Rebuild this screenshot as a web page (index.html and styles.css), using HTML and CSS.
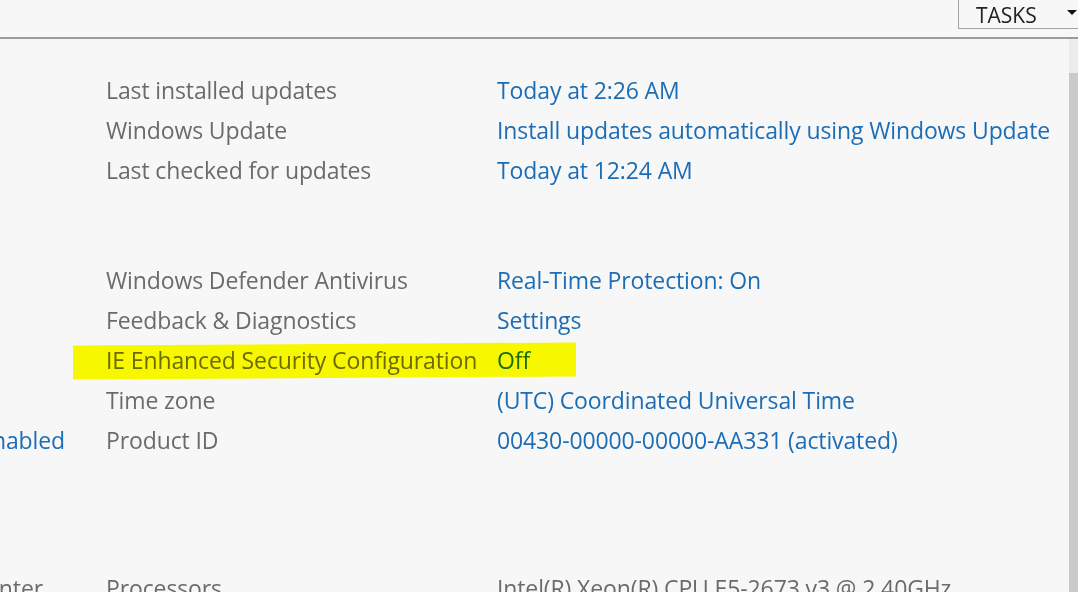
FILE: index.html
```html
<!DOCTYPE html>
<html>
<head>
<meta charset="utf-8">
<link rel="stylesheet" href="styles.css">
</head>
<body>
<div class="page">
  <header class="topbar">
    <div class="tasks">
      <span class="tasks-label">TASKS</span>
      <span class="tasks-caret"></span>
    </div>
  </header>
  <div class="main">
    <div class="content">
      <div class="group g1">
        <div class="side"></div><div class="label">Last installed updates</div><div class="value">Today at 2:26 AM</div>
        <div class="side"></div><div class="label">Windows Update</div><div class="value">Install updates automatically using Windows Update</div>
        <div class="side"></div><div class="label">Last checked for updates</div><div class="value">Today at 12:24 AM</div>
      </div>
      <div class="group g2">
        <div class="side"></div><div class="label">Windows Defender Antivirus</div><div class="value">Real-Time Protection: On</div>
        <div class="side"></div><div class="label">Feedback &amp; Diagnostics</div><div class="value">Settings</div>
        <div class="side"></div><div class="label">IE Enhanced Security Configuration</div><div class="value">Off</div>
        <div class="side"></div><div class="label">Time zone</div><div class="value">(UTC) Coordinated Universal Time</div>
        <div class="side side-link"><span>Enabled</span></div><div class="label">Product ID</div><div class="value">00430-00000-00000-AA331 (activated)</div>
      </div>
      <div class="group g3">
        <div class="side side-gray"><span>Action Center</span></div><div class="label">Processors</div><div class="value value-gray">Intel(R) Xeon(R) CPU E5-2673 v3 @ 2.40GHz</div>
      </div>
      <div class="highlight"></div>
    </div>
    <div class="scrollbar"><div class="thumb"></div></div>
  </div>
</div>
</body>
</html>
```
FILE: styles.css
```css
html, body {
  margin: 0;
  padding: 0;
  background: #f7f7f7;
  overflow: hidden;
}
.page {
  width: 1078px;
  height: 592px;
  overflow: hidden;
  font-family: "Open Sans", "Noto Sans", sans-serif;
  font-size: 23px;
  letter-spacing: -0.12px;
  display: flex;
  flex-direction: column;
}
.topbar {
  height: 37px;
  border-bottom: 2px solid #9b9b9b;
  display: flex;
  justify-content: flex-end;
  align-items: flex-start;
  flex-shrink: 0;
}
.tasks {
  width: 140px;
  height: 30px;
  margin-right: -20px;
  margin-top: -1px;
  border-left: 1px solid #a3a3a3;
  border-bottom: 1px solid #a3a3a3;
  display: flex;
  align-items: center;
  padding-left: 17px;
  padding-top: 2px;
  box-sizing: border-box;
  color: #222;
}
.tasks-label {
  font-size: 21px;
  letter-spacing: 0;
  line-height: 28px;
}
.tasks-caret {
  margin-left: 30px;
  width: 0;
  height: 0;
  border-left: 5px solid transparent;
  border-right: 5px solid transparent;
  border-top: 5px solid #111;
  margin-top: -4px;
}
.main {
  flex: 1;
  display: flex;
  min-height: 0;
}
.content {
  flex: 1;
  position: relative;
  padding-top: 31px;
}
.group {
  display: grid;
  grid-template-columns: 106px 391px auto;
  grid-auto-rows: 40px;
  line-height: 40px;
  white-space: nowrap;
}
.g2 { margin-top: 70px; }
.g3 { margin-top: 108px; }
.label { color: #6b6b6b; }
.value { color: #1c6db5; }
.value-gray { color: #6b6b6b; }
.side {
  display: flex;
  justify-content: flex-end;
  padding-right: 41px;
  min-width: 0;
}
.side-link { color: #1c6db5; }
.side-gray { color: #6b6b6b; padding-right: 63px; }
.highlight {
  position: absolute;
  left: 73px;
  top: 305px;
  width: 503px;
  height: 34px;
  background: #ffff00;
  mix-blend-mode: multiply;
  transform: rotate(-0.35deg);
}
.scrollbar {
  width: 9px;
  flex-shrink: 0;
  background: #ececec;
  display: flex;
  flex-direction: column;
  padding-top: 34px;
  box-sizing: border-box;
}
.thumb {
  flex: 1;
  background: #cacaca;
}
```
